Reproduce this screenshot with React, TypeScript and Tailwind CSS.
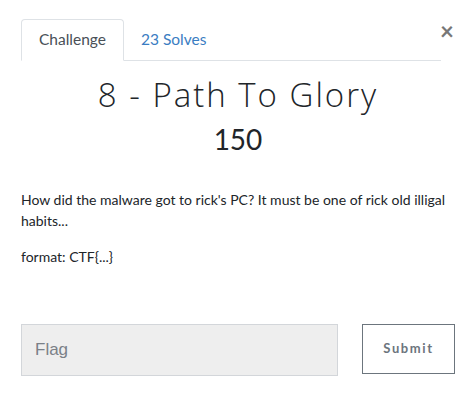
export default function App() {
  return (
    <div className="relative w-[471px] h-[401px] bg-white font-['Lato',sans-serif] text-[#212529]">
      <button className="absolute right-[17px] top-[19px] text-[24px] leading-none font-bold text-[#777]">
        ×
      </button>

      <div className="pl-[21px] pr-[16px] pt-[19px]">
        {/* Tabs */}
        <div className="flex w-[420px] border-b border-[#dee2e6]">
          <div className="-mb-px h-[42px] w-[103px] flex items-center justify-center border border-[#dee2e6] border-b-white rounded-t-[4px] bg-white text-[15.5px] text-[#495057]">
            Challenge
          </div>
          <div className="h-[41px] flex items-center pl-[17px] text-[15.5px] text-[#3a7dc2]">23 Solves</div>
        </div>

        {/* Title */}
        <div className="text-center">
          <h1 className="mt-[14px] text-[33px] leading-[40px] font-light tracking-[2px] font-['Open_Sans',sans-serif] text-[#212529]">
            8 - Path To Glory
          </h1>
          <div className="mt-[6px] text-[28px] leading-[36px] text-[#212529]">150</div>
        </div>

        {/* Description */}
        <div className="mt-[32px] pr-[5px] text-[14px] leading-[21px] text-[#212529]">
          <p className="mb-[15px]">
            How did the malware got to rick's PC? It must be one of rick old illigal habits...
          </p>
          <p>format: CTF{'{...}'}</p>
        </div>

        {/* Flag form */}
        <div className="mt-[57px] flex gap-[24px] items-start">
          <input
            placeholder="Flag"
            className="shrink-0 w-[317px] h-[52px] bg-[#eeeeee] border border-[#d3d6da] px-[13px] text-[17px] font-['Liberation_Sans',sans-serif] placeholder:text-[#7a8087] outline-none"
          />
          <button className="shrink-0 w-[93px] h-[50px] border border-[#6c757d] text-[13px] font-bold tracking-[1.6px] text-[#6c757d]">
            Submit
          </button>
        </div>
      </div>
    </div>
  );
}
